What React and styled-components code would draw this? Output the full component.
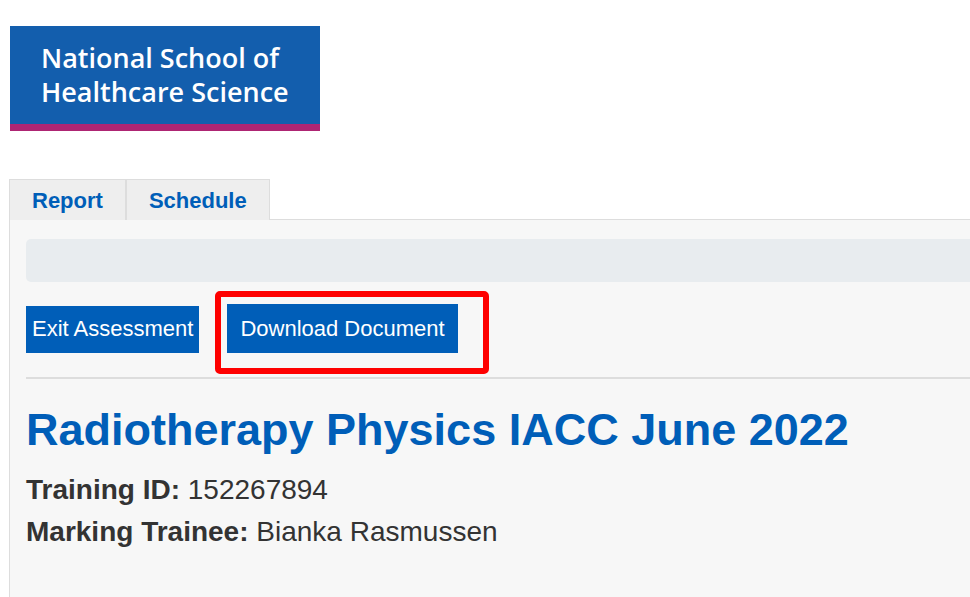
import React from 'react';
import styled, { createGlobalStyle } from 'styled-components';

const GlobalStyle = createGlobalStyle`
  * {
    box-sizing: border-box;
  }
  body {
    margin: 0;
    background: #fff;
    color: #333;
    font-family: 'Liberation Sans', Arial, sans-serif;
  }
`;

const Page = styled.div`
  min-height: 100vh;
  display: flex;
  flex-direction: column;
  padding: 26px 0 0 9px;
`;

const Logo = styled.div`
  align-self: flex-start;
  margin: 0 0 48px 1px;
  padding: 15px 31px;
  background: #135ead;
  border-bottom: 7px solid #ae2573;
  color: #fff;
  font: 600 27px/34px 'Open Sans', 'Noto Sans', sans-serif;
`;

/* sits above the panel so the tabs cover its top border */
const Tabs = styled.nav`
  display: flex;
  z-index: 1;
`;

const Tab = styled.a`
  height: 41px;
  padding: 0 22px;
  margin-bottom: -1px;
  border: 1px solid #ddd;
  border-bottom: 0;
  background: #eee;
  color: #005eb8;
  font-size: 22px;
  font-weight: bold;
  line-height: 41px;
  text-decoration: none;
`;

const Panel = styled.main`
  flex: 1;
  padding: 19px 0 0 16px;
  border: 1px solid #ddd;
  border-width: 1px 0 0 1px;
  background: #f7f7f7;
`;

const Breadcrumb = styled.div`
  height: 43px;
  border-radius: 5px 0 0 5px;
  background: #e8ecef;
`;

const Actions = styled.div`
  display: flex;
  align-items: baseline;
  gap: 16px;
  padding: 9px 0 3px;
  border-bottom: 2px solid #ddd;
`;

const Highlight = styled.div`
  padding: 7px 25px 15px 6px;
  border: 6px solid #fe0000;
  border-radius: 5px;
`;

const Button = styled.button`
  display: block;
  height: ${(props) => (props.$large ? '49px' : '47px')};
  padding: ${(props) => (props.$large ? '0 13px' : '0 6px 2px')};
  border: 0;
  background: #005eb8;
  color: #fff;
  font: 22px 'Liberation Sans', Arial, sans-serif;
`;

const Title = styled.h1`
  margin: 25px 0 13px;
  color: #005eb8;
  font-size: 45px;
  line-height: 52px;
`;

const Detail = styled.p`
  margin: 0;
  font-size: 28px;
  line-height: 42px;
`;

const tabs = ['Report', 'Schedule'];

const details = [
  { label: 'Training ID:', value: '152267894' },
  { label: 'Marking Trainee:', value: 'Bianka Rasmussen' },
];

export default function App() {
  return (
    <>
      <GlobalStyle />
      <Page>
        <Logo>
          National School of
          <br />
          Healthcare Science
        </Logo>
        <Tabs>
          {tabs.map((tab) => (
            <Tab href="#" key={tab}>
              {tab}
            </Tab>
          ))}
        </Tabs>
        <Panel>
          <Breadcrumb />
          <Actions>
            <Button type="button">Exit Assessment</Button>
            <Highlight>
              <Button type="button" $large>
                Download Document
              </Button>
            </Highlight>
          </Actions>
          <Title>Radiotherapy Physics IACC June 2022</Title>
          {details.map(({ label, value }) => (
            <Detail key={label}>
              <strong>{label}</strong> {value}
            </Detail>
          ))}
        </Panel>
      </Page>
    </>
  );
}
